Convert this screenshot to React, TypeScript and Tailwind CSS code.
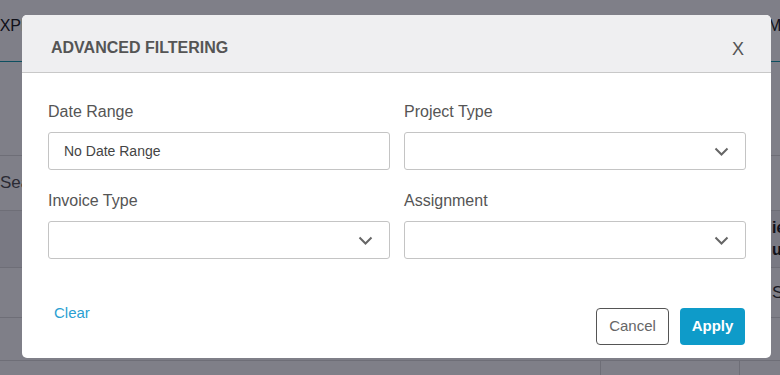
const font = "font-['Liberation_Sans',Arial,sans-serif]";

function Chevron() {
  return (
    <svg width="15" height="9" viewBox="0 0 15 9" className="text-[#666]">
      <polyline points="1.5,1.5 7.5,7.5 13.5,1.5" fill="none" stroke="currentColor" strokeWidth="2" />
    </svg>
  );
}

function Field({ label, children }: { label: string; children: React.ReactNode }) {
  return (
    <div className="flex flex-col">
      <label className="text-[16px] leading-[20px] text-[#555] mb-[10px]">{label}</label>
      {children}
    </div>
  );
}

function SelectBox() {
  return (
    <div className="h-[38px] border border-[#c4c4c4] rounded-[3px] bg-white flex items-center justify-end pr-[16px]">
      <Chevron />
    </div>
  );
}

function BackgroundPage() {
  return (
    <div className={`w-[780px] h-[375px] bg-white text-[#222] overflow-hidden ${font}`}>
      <div className="h-[62px] border-b border-[#1a9fae] flex justify-between items-start pt-[14px]">
        <span className="-ml-[11px] text-[16px]">EXPENSES</span>
        <span className="-mr-[12px] text-[16px]">MY</span>
      </div>
      <div className="h-[93px]" />
      <div className="h-[56px] border-y border-[#ddd] flex items-center">
        <span className="text-[17px] text-[#555]">Search</span>
      </div>
      <div className="h-[57px] bg-[#f2f2f4] border-b border-[#ddd] flex justify-end items-center">
        <div className="w-[8px] overflow-hidden text-[16px] leading-[22px] font-bold">
          <div>ie</div>
          <div>u</div>
        </div>
      </div>
      <div className="h-[50px] border-b border-[#ddd] flex justify-end items-center">
        <span className="w-[8px] overflow-hidden text-[17px] text-[#333]">St</span>
      </div>
      <div className="h-[43px] border-b border-[#ddd]" />
      <div className="h-[20px] grid grid-cols-[601px_139px_40px]">
        <div className="border-r border-[#ddd]" />
        <div className="border-r border-[#ddd]" />
        <div />
      </div>
    </div>
  );
}

export default function App() {
  return (
    <div className="relative w-[780px] h-[375px] overflow-hidden">
      <BackgroundPage />
      <div className="absolute inset-0 bg-[#000012]/50 pl-[22px] pt-[15px]">
        <div className={`w-[749px] h-[343px] bg-white rounded-[5px] overflow-hidden flex flex-col ${font}`}>
          {/* Header */}
          <div className="h-[58px] bg-[#efeff1] border-b border-[#c8c8c8] flex justify-between items-start pt-[23px] pl-[29px] pr-[27px]">
            <h2 className="text-[16px] leading-[20px] font-bold text-[#555]">ADVANCED FILTERING</h2>
            <button className="text-[18px] leading-[20px] text-[#555] mt-[1px]">X</button>
          </div>

          {/* Body */}
          <div className="pt-[29px] px-[26px] pr-[25px] grid grid-cols-2 gap-x-[14px] gap-y-[21px]">
            <Field label="Date Range">
              <div className="h-[38px] border border-[#c4c4c4] rounded-[3px] bg-white flex items-center pl-[15px] text-[14px] text-[#444]">
                No Date Range
              </div>
            </Field>
            <Field label="Project Type">
              <SelectBox />
            </Field>
            <Field label="Invoice Type">
              <SelectBox />
            </Field>
            <Field label="Assignment">
              <SelectBox />
            </Field>
          </div>

          {/* Footer */}
          <div className="mt-[49px] px-[26px] flex justify-between items-start">
            <a className="ml-[6px] mt-[-5px] text-[15px] leading-[20px] text-[#2a9fd2] cursor-pointer">Clear</a>
            <div className="flex gap-[11px]">
              <button className="w-[73px] h-[37px] border border-[#555] rounded-[4px] text-[15px] text-[#666] bg-white">
                Cancel
              </button>
              <button className="w-[65px] h-[37px] rounded-[4px] text-[15px] font-bold text-white bg-[#0e9bc9]">
                Apply
              </button>
            </div>
          </div>
        </div>
      </div>
    </div>
  );
}
